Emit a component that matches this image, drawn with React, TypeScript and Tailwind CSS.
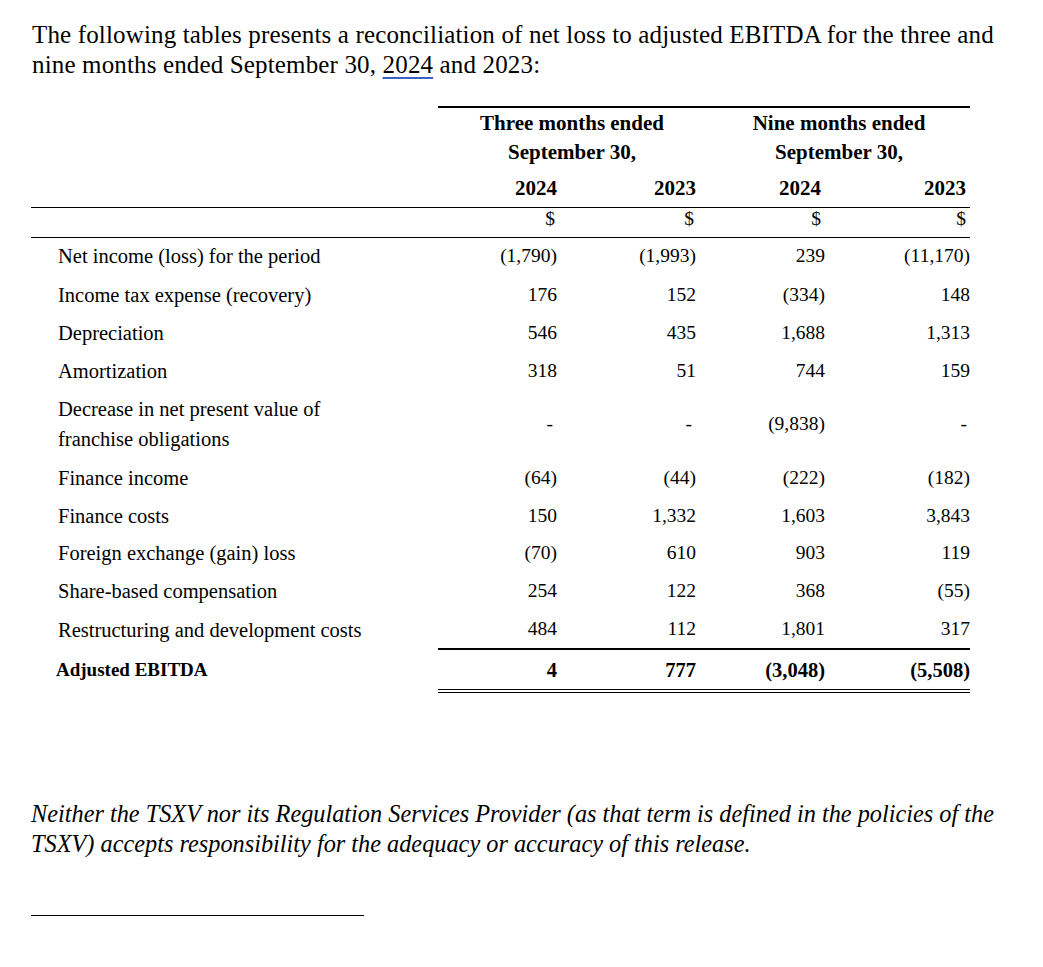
import React from "react";

const rows: { label: React.ReactNode; v: string[]; h: number }[] = [
  { label: "Net income (loss) for the period", v: ["(1,790)", "(1,993)", "239", "(11,170)"], h: 38 },
  { label: "Income tax expense (recovery)", v: ["176", "152", "(334)", "148"], h: 39 },
  { label: "Depreciation", v: ["546", "435", "1,688", "1,313"], h: 37 },
  { label: "Amortization", v: ["318", "51", "744", "159"], h: 39 },
  {
    label: (
      <>
        Decrease in net present value of
        <br />
        franchise obligations
      </>
    ),
    v: ["-", "-", "(9,838)", "-"],
    h: 68,
  },
  { label: "Finance income", v: ["(64)", "(44)", "(222)", "(182)"], h: 39 },
  { label: "Finance costs", v: ["150", "1,332", "1,603", "3,843"], h: 37 },
  { label: "Foreign exchange (gain) loss", v: ["(70)", "610", "903", "119"], h: 38 },
  { label: "Share-based compensation", v: ["254", "122", "368", "(55)"], h: 38 },
  { label: "Restructuring and development costs", v: ["484", "112", "1,801", "317"], h: 39 },
];

export default function App() {
  return (
    <div
      className="bg-white text-black w-[1043px] min-h-[967px] overflow-hidden"
      style={{ fontFamily: '"Liberation Serif", "DejaVu Serif", serif' }}
    >
      <div className="pl-[32px] pt-[20px] text-[25px] leading-[30px] tracking-[0.15px]">
        The following tables presents a reconciliation of net loss to adjusted EBITDA for the three and
        <br />
        nine months ended September 30,{" "}
        <span className="underline decoration-[#3a62c4] underline-offset-[4px]">2024</span> and 2023:
      </div>

      <table className="ml-[31px] mt-[26px] border-collapse leading-[30px]" style={{ tableLayout: "fixed" }}>
        <colgroup>
          <col className="w-[407px]" />
          <col className="w-[119px]" />
          <col className="w-[139px]" />
          <col className="w-[129px]" />
          <col className="w-[145px]" />
        </colgroup>
        <tbody>
          <tr className="h-[29px] text-[21px]">
            <td></td>
            <td colSpan={2} className="border-t-2 border-black text-center font-bold align-bottom leading-[26px] pl-[10px]">
              Three months ended
            </td>
            <td colSpan={2} className="border-t-2 border-black text-center font-bold align-bottom leading-[26px] pl-[12px]">
              Nine months ended
            </td>
          </tr>
          <tr className="h-[31px] text-[21px]">
            <td></td>
            <td colSpan={2} className="text-center font-bold pl-[10px]">September 30,</td>
            <td colSpan={2} className="text-center font-bold pl-[12px]">September 30,</td>
          </tr>
          <tr className="h-[40px] text-[21px]">
            <td className="border-b border-black"></td>
            <td className="border-b border-black text-right font-bold pt-[3px]">2024</td>
            <td className="border-b border-black text-right font-bold pt-[3px]">2023</td>
            <td className="border-b border-black text-right font-bold pt-[3px] pr-[4px]">2024</td>
            <td className="border-b border-black text-right font-bold pt-[3px] pr-[4px]">2023</td>
          </tr>
          <tr className="h-[30px] text-[19.5px]">
            <td className="border-b border-black"></td>
            <td className="border-b border-black text-right pr-[2px] align-top leading-[22px]">$</td>
            <td className="border-b border-black text-right pr-[2px] align-top leading-[22px]">$</td>
            <td className="border-b border-black text-right pr-[4px] align-top leading-[22px]">$</td>
            <td className="border-b border-black text-right pr-[4px] align-top leading-[22px]">$</td>
          </tr>
          {rows.map((r, i) => (
            <tr key={i} style={{ height: r.h }}>
              <td className="pl-[27px] align-middle text-[20.5px]">{r.label}</td>
              {r.v.map((x, j) => (
                <td
                  key={j}
                  className={`text-right align-middle text-[19.5px] ${x === "-" ? (j === 3 ? "pr-[3px]" : "pr-[4px]") : ""}`}
                >
                  {x}
                </td>
              ))}
            </tr>
          ))}
          <tr className="h-[42px]">
            <td className="pl-[25px] font-bold align-middle text-[19px]">Adjusted EBITDA</td>
            {["4", "777", "(3,048)", "(5,508)"].map((x, j) => (
              <td
                key={j}
                className="text-right font-bold align-middle text-[20.5px] border-t-2 border-black border-b-[4px] border-double"
              >
                {x}
              </td>
            ))}
          </tr>
        </tbody>
      </table>

      <div className="pl-[31px] mt-[106px] text-[24.3px] leading-[30px] italic">
        Neither the TSXV nor its Regulation Services Provider (as that term is defined in the policies of the
        <br />
        TSXV) accepts responsibility for the adequacy or accuracy of this release.
      </div>

      <div className="ml-[31px] mt-[56px] w-[333px] border-t border-black"></div>
    </div>
  );
}
